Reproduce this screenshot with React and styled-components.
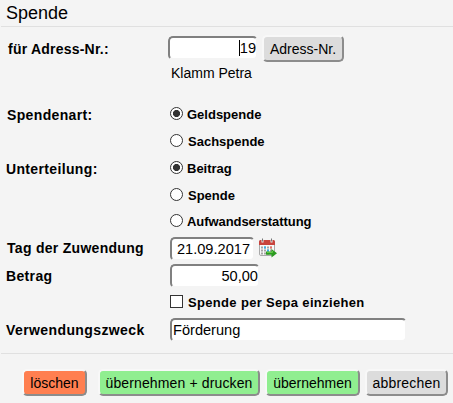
import styled, { createGlobalStyle } from 'styled-components';

export default function App() {
  return (
    <>
      <GlobalStyle />
      <Page>
        <Title>Spende</Title>
        <Form>
          <Row>
            <Label $indent={2} $spacing={0.22}>für Adress-Nr.:</Label>
            <NumberWrap>
              <Field $width={90} $right defaultValue="19" />
              <Caret />
            </NumberWrap>
            <AddressButton>Adress-Nr.</AddressButton>
          </Row>
          <Row $height={39}>
            <Label />
            <Name>Klamm Petra</Name>
          </Row>
          <Row>
            <Label $indent={1}>Spendenart:</Label>
            <Radio name="art" defaultChecked />
            <Option>Geldspende</Option>
          </Row>
          <Row>
            <Label />
            <Radio name="art" />
            <Option $indent={1}>Sachspende</Option>
          </Row>
          <Row>
            <Label>Unterteilung:</Label>
            <Radio name="teil" defaultChecked />
            <Option>Beitrag</Option>
          </Row>
          <Row>
            <Label />
            <Radio name="teil" />
            <Option $indent={1}>Spende</Option>
          </Row>
          <Row $height={25}>
            <Label />
            <Radio name="teil" />
            <Option $spacing={-0.07}>Aufwandserstattung</Option>
          </Row>
          <Row $height={28}>
            <Label $indent={1} $spacing={0.29}>Tag der Zuwendung</Label>
            <LowerField $width={85} $center defaultValue="21.09.2017" />
            <CalendarIcon />
          </Row>
          <Row>
            <Label>Betrag</Label>
            <LowerField $width={90} $right defaultValue="50,00" />
          </Row>
          <Row>
            <Label />
            <Checkbox />
            <Option $indent={1} $spacing={0.33}>
              Spende per Sepa einziehen
            </Option>
          </Row>
          <Row>
            <Label $spacing={0.4}>Verwendungszweck</Label>
            <LowerField $width={237} defaultValue="Förderung" />
          </Row>
        </Form>
        <Actions>
          <Button $color="#ff7f50" $width={65}>löschen</Button>
          <Button $color="#90ee90" $width={162} $left={11} $spacing={0.13}>
            übernehmen + drucken
          </Button>
          <Button $color="#90ee90" $width={95} $left={5}>übernehmen</Button>
          <Button $color="#dcdcdc" $width={83} $left={5} $spacing={0.2}>abbrechen</Button>
        </Actions>
      </Page>
    </>
  );
}

function CalendarIcon() {
  return (
    <Calendar width="20" height="20" viewBox="0 0 20 20">
      <rect x="1.5" y="2.5" width="15" height="15" rx="1.5" fill="#f8f8f8" stroke="#a9a9a9" />
      <path d="M1 7V3.5Q1 2 2.5 2h13Q17 2 17 3.5V7z" fill="#c8433c" />
      <path d="M4.5 1v3.5M13.5 1v3.5" stroke="#eee" strokeWidth="2" />
      <path d="M4.5 .5v3M13.5 .5v3" stroke="#777" />
      <path d="M3 9.5h12M3 12.5h12M3 15.5h8" stroke="#a5a5a5" strokeWidth="2" strokeDasharray="2 1" />
      <path d="M6 9.5h2M9 12.5h2" stroke="#35aee8" strokeWidth="2" />
      <path d="M12 9.5h2" stroke="#e77468" strokeWidth="2" />
      <path d="M8 13.5h5.5v-2.5l5.5 4.2-5.5 4.2v-2.6H8z" fill="#2b9b20" />
      <path d="M9 14.5h5.5v-1.5" stroke="#62c944" fill="none" />
    </Calendar>
  );
}

const GlobalStyle = createGlobalStyle`
  * {
    box-sizing: border-box;
  }

  body {
    margin: 0;
    background: #f4f4f4;
    color: #000;
    font-family: 'Liberation Sans', Arial, sans-serif;
    font-size: 14px;
  }
`;

const Page = styled.main`
  width: 453px;
  height: 403px;
  overflow: hidden;
`;

const Title = styled.h1`
  height: 27px;
  margin: 0 0 0 1px;
  padding-left: 5px;
  border-bottom: 1px solid #e0e0e0;
  font-size: 18px;
  font-weight: normal;
  line-height: 26px;
`;

const Form = styled.div`
  height: 327px;
  margin-left: 1px;
  padding: 8px 0 0 5px;
  border-bottom: 1px solid #e0e0e0;
`;

const Row = styled.div`
  display: flex;
  align-items: ${({ $height }) => ($height > 30 ? 'flex-start' : 'center')};
  height: ${({ $height = 27 }) => $height}px;
`;

const Label = styled.span`
  flex: 0 0 162px;
  padding-left: ${({ $indent = 0 }) => $indent}px;
  font-weight: bold;
  letter-spacing: ${({ $spacing = 0.35 }) => $spacing}px;
  white-space: nowrap;
`;

const Field = styled.input.attrs({ type: 'text' })`
  width: ${({ $width }) => $width}px;
  height: 24px;
  margin: 0 0 1px;
  padding: 0 ${({ $right }) => ($right ? 0 : 1)}px 0 ${({ $center }) => ($center ? 3 : 1)}px;
  border: 2px solid;
  border-color: #808080 #f4f4f4 #f4f4f4 #808080;
  border-radius: 5px;
  outline: none;
  background: #fff;
  color: #000;
  font: 14.6px 'Liberation Sans', Arial, sans-serif;
  text-align: ${({ $right, $center }) => ($right ? 'right' : $center ? 'center' : 'left')};
`;

const LowerField = styled(Field)`
  margin: 1px 0 0 2px;
`;

const NumberWrap = styled.span`
  position: relative;
  display: flex;
`;

const Caret = styled.i`
  position: absolute;
  top: 4px;
  right: 18px;
  width: 1px;
  height: 16px;
  background: #000;
`;

const Button = styled.button`
  width: ${({ $width }) => $width}px;
  height: 27px;
  margin: 0 0 0 ${({ $left = 0 }) => $left}px;
  padding: 0;
  border: 2px solid;
  border-color: #f8f8f8 #8c8c8c #8c8c8c #f8f8f8;
  border-radius: 5px;
  background: ${({ $color }) => $color};
  color: #000;
  font: 14px 'Liberation Sans', Arial, sans-serif;
  letter-spacing: ${({ $spacing = 0 }) => $spacing}px;
  white-space: nowrap;
`;

const AddressButton = styled(Button).attrs({ $color: '#dcdcdc', $width: 82, $left: 4 })``;

const Name = styled.span`
  padding: 3px 0 0 3px;
`;

const Radio = styled.input.attrs({ type: 'radio' })`
  appearance: none;
  flex: none;
  width: 13px;
  height: 13px;
  margin: 0 4px 2px 2px;
  border: 1px solid #333;
  border-radius: 50%;
  background: #fff;

  &:checked {
    background: radial-gradient(circle, #333 3.2px, #fff 3.9px);
  }
`;

const Checkbox = styled.input.attrs({ type: 'checkbox' })`
  appearance: none;
  flex: none;
  width: 13px;
  height: 13px;
  margin: 0 4px 2px 2px;
  border: 1px solid #333;
  background: #fff;
`;

const Option = styled.span`
  padding-left: ${({ $indent = 0 }) => $indent}px;
  font-size: 13px;
  font-weight: bold;
  letter-spacing: ${({ $spacing = 0 }) => $spacing}px;
`;

const Calendar = styled.svg`
  margin-left: 3px;
`;

const Actions = styled.div`
  display: flex;
  padding: 15px 0 0 22px;
`;
